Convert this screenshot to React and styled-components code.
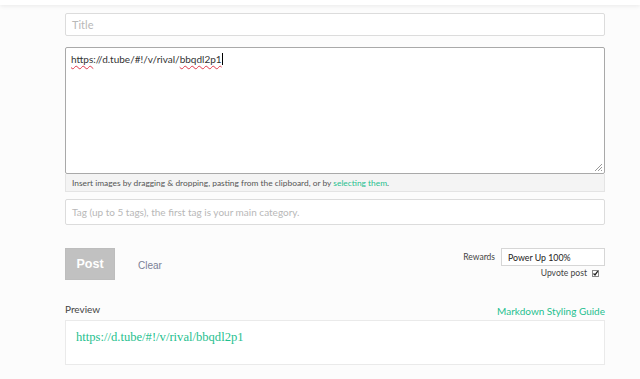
import React from "react";
import styled, { createGlobalStyle } from "styled-components";

const Global = createGlobalStyle`
  html, body { margin: 0; padding: 0; background: #fcfcfc; }
  body { font-family: Lato, "Open Sans", sans-serif; color: #333; }
  * { box-sizing: border-box; }
`;

const Header = styled.div`
  height: 5px;
  background: #ffffff;
  box-shadow: 0 1px 4px rgba(0, 0, 0, 0.08);
`;

const Column = styled.div`
  width: 540px;
  margin: 0 0 0 65px;
  padding-top: 8px;
  display: flex;
  flex-direction: column;
`;

const Field = styled.div`
  width: 100%;
  height: ${(p) => p.$h}px;
  border: 1px solid ${(p) => (p.$dark ? "#a9a9a9" : "#dcdcdc")};
  border-radius: 2px;
  background: #fff;
  padding: ${(p) => p.$pad || "0 6px"};
  font-size: ${(p) => p.$fs || 10}px;
  color: ${(p) => (p.$placeholder ? "#b8b8b8" : "#333")};
  display: flex;
  align-items: ${(p) => (p.$top ? "flex-start" : "center")};
  margin-top: ${(p) => p.$mt || 0}px;
  position: relative;
`;

const Squiggle = styled.span`
  text-decoration: underline wavy #e0394b;
  text-decoration-thickness: 1px;
  text-underline-offset: 2px;
`;

const Caret = styled.span`
  display: inline-block;
  width: 1px;
  height: 12px;
  background: #000;
  vertical-align: -2px;
`;

const Grip = styled.svg`
  position: absolute;
  right: 1px;
  bottom: 1px;
`;

const Hint = styled.div`
  width: 100%;
  height: 18px;
  background: #f4f4f4;
  border: 1px solid #e4e4e4;
  border-top: none;
  font-size: 8.4px;
  color: #555;
  padding: 0 6px;
  display: flex;
  align-items: center;
`;

const Link = styled.span`
  color: #1fbf8f;
`;

const Actions = styled.div`
  display: flex;
  justify-content: space-between;
  margin-top: 23px;
`;

const LeftActions = styled.div`
  display: flex;
  align-items: center;
  height: 32px;
`;

const PostButton = styled.div`
  width: 50px;
  height: 32px;
  background: #c1c1c1;
  color: #fff;
  font-family: "Liberation Sans", Arial, sans-serif;
  font-weight: bold;
  font-size: 12.5px;
  display: flex;
  align-items: center;
  justify-content: center;
  border: 1px solid #bdbdbd;
`;

const ClearLink = styled.div`
  font-family: "Liberation Sans", Arial, sans-serif;
  font-size: 10px;
  color: #7b8196;
  margin-left: 23px;
  padding-top: 2px;
`;

const RightActions = styled.div`
  display: flex;
  flex-direction: column;
  align-items: flex-end;
`;

const RewardsRow = styled.div`
  display: flex;
  align-items: center;
  gap: 6px;
  font-size: 8.5px;
  color: #444;
`;

const SelectBox = styled.div`
  width: 104px;
  height: 18px;
  border: 1px solid #d6d6d6;
  background: #fff;
  font-size: 8.8px;
  color: #222;
  padding: 0 6px;
  display: flex;
  align-items: center;
`;

const UpvoteRow = styled.div`
  display: flex;
  align-items: center;
  gap: 5px;
  margin-top: 2px;
  margin-right: 6px;
  font-size: 8.6px;
  color: #444;
`;

const Check = styled.svg`
  display: block;
`;

const PreviewHead = styled.div`
  display: flex;
  justify-content: space-between;
  align-items: flex-end;
  margin-top: 23px;
  height: 16px;
`;

const PreviewLabel = styled.div`
  font-size: 10px;
  color: #444;
  align-self: flex-start;
`;

const GuideLink = styled.div`
  font-size: 10px;
  color: #1fbf8f;
  padding-bottom: 2px;
`;

const PreviewBox = styled.div`
  margin-top: 1px;
  height: 45px;
  border: 1px solid #eaeaea;
  background: #fff;
  padding: 9px 10px;
  font-family: "Liberation Serif", "DejaVu Serif", serif;
  font-size: 12.6px;
  color: #1fbf8f;
`;

export default function App() {
  return (
    <>
      <Global />
      <Header />
      <Column>
        <Field $h={23} $mt={0} $fs={11} $placeholder>Title</Field>
        <Field $h={127} $mt={11} $dark $top $pad="5px 5px">
          <span>
            <Squiggle>https</Squiggle>://d.tube/#!/v/rival/<Squiggle>bbqdl2p1</Squiggle>
            <Caret />
          </span>
          <Grip width="9" height="9" viewBox="0 0 9 9">
            <path d="M8 1 L1 8 M8 4 L4 8 M8 7 L7 8" stroke="#999" strokeWidth="1" />
          </Grip>
        </Field>
        <Hint>
          Insert images by dragging &amp; dropping, pasting from the clipboard, or by&nbsp;
          <Link>selecting them</Link>.
        </Hint>
        <Field $h={26} $mt={7} $placeholder>
          Tag (up to 5 tags), the first tag is your main category.
        </Field>
        <Actions>
          <LeftActions>
            <PostButton>Post</PostButton>
            <ClearLink>Clear</ClearLink>
          </LeftActions>
          <RightActions>
            <RewardsRow>
              Rewards
              <SelectBox>Power Up 100%</SelectBox>
            </RewardsRow>
            <UpvoteRow>
              Upvote post
              <Check width="7" height="7" viewBox="0 0 7 7">
                <rect x="0.5" y="0.5" width="6" height="6" fill="#fff" stroke="#888" />
                <path d="M1.5 3.5 L3 5 L5.8 1.2" stroke="#222" strokeWidth="1.3" fill="none" />
              </Check>
            </UpvoteRow>
          </RightActions>
        </Actions>
        <PreviewHead>
          <PreviewLabel>Preview</PreviewLabel>
          <GuideLink>Markdown Styling Guide</GuideLink>
        </PreviewHead>
        <PreviewBox>https://d.tube/#!/v/rival/bbqdl2p1</PreviewBox>
      </Column>
    </>
  );
}
